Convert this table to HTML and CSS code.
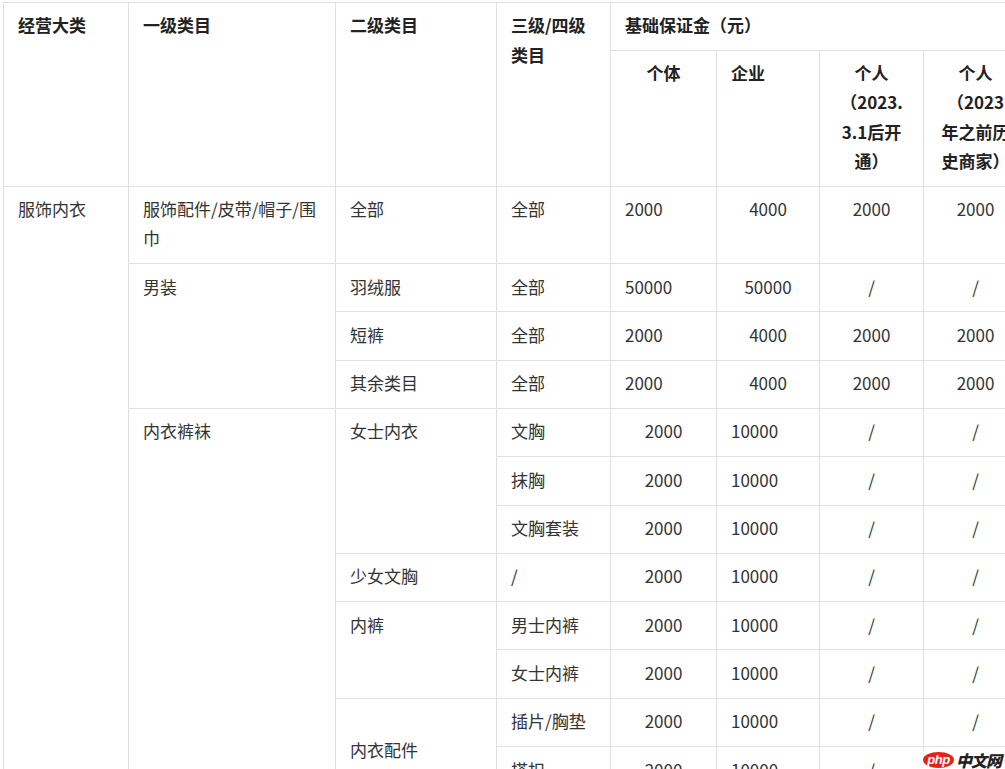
FILE: index.html
```html
<!DOCTYPE html>
<html lang="zh-CN">
<head>
<meta charset="utf-8">
<title>保证金标准</title>
<link rel="stylesheet" href="styles.css">
</head>
<body>
<div class="page">
  <table class="deposit">
    <colgroup>
      <col class="w1"><col class="w2"><col class="w3"><col class="w4">
      <col class="w5"><col class="w6"><col class="w7"><col class="w8">
    </colgroup>
    <thead>
      <tr>
        <th rowspan="2">经营大类</th>
        <th rowspan="2">一级类目</th>
        <th rowspan="2">二级类目</th>
        <th rowspan="2">三级/四级<br>类目</th>
        <th colspan="4" class="group">基础保证金（元）</th>
      </tr>
      <tr>
        <th class="c">个体</th>
        <th>企业</th>
        <th class="c">个人<br>（2023.<br>3.1后开<br>通）</th>
        <th class="c">个人<br>（2023<br>年之前历<br>史商家）</th>
      </tr>
    </thead>
    <tbody>
      <tr>
        <td rowspan="13">服饰内衣</td>
        <td>服饰配件/皮带/帽子/围<br>巾</td>
        <td>全部</td>
        <td>全部</td>
        <td>2000</td>
        <td class="c">4000</td>
        <td class="c">2000</td>
        <td class="c">2000</td>
      </tr>
      <tr>
        <td rowspan="3">男装</td>
        <td>羽绒服</td>
        <td>全部</td>
        <td>50000</td>
        <td class="c">50000</td>
        <td class="c">/</td>
        <td class="c">/</td>
      </tr>
      <tr>
        <td>短裤</td>
        <td>全部</td>
        <td>2000</td>
        <td class="c">4000</td>
        <td class="c">2000</td>
        <td class="c">2000</td>
      </tr>
      <tr>
        <td>其余类目</td>
        <td>全部</td>
        <td>2000</td>
        <td class="c">4000</td>
        <td class="c">2000</td>
        <td class="c">2000</td>
      </tr>
      <tr>
        <td rowspan="9">内衣裤袜</td>
        <td rowspan="3">女士内衣</td>
        <td>文胸</td>
        <td class="c">2000</td>
        <td>10000</td>
        <td class="c">/</td>
        <td class="c">/</td>
      </tr>
      <tr>
        <td>抹胸</td>
        <td class="c">2000</td>
        <td>10000</td>
        <td class="c">/</td>
        <td class="c">/</td>
      </tr>
      <tr>
        <td>文胸套装</td>
        <td class="c">2000</td>
        <td>10000</td>
        <td class="c">/</td>
        <td class="c">/</td>
      </tr>
      <tr>
        <td>少女文胸</td>
        <td>/</td>
        <td class="c">2000</td>
        <td>10000</td>
        <td class="c">/</td>
        <td class="c">/</td>
      </tr>
      <tr>
        <td rowspan="2">内裤</td>
        <td>男士内裤</td>
        <td class="c">2000</td>
        <td>10000</td>
        <td class="c">/</td>
        <td class="c">/</td>
      </tr>
      <tr>
        <td>女士内裤</td>
        <td class="c">2000</td>
        <td>10000</td>
        <td class="c">/</td>
        <td class="c">/</td>
      </tr>
      <tr>
        <td rowspan="2" class="mid">内衣配件</td>
        <td>插片/胸垫</td>
        <td class="c">2000</td>
        <td>10000</td>
        <td class="c">/</td>
        <td class="c">/</td>
      </tr>
      <tr>
        <td>搭扣</td>
        <td class="c">2000</td>
        <td>10000</td>
        <td class="c">/</td>
        <td class="c">/</td>
      </tr>
      <tr>
        <td>袜子</td>
        <td>全部</td>
        <td class="c">2000</td>
        <td>10000</td>
        <td class="c">/</td>
        <td class="c">/</td>
      </tr>
    </tbody>
  </table>
  <div class="watermark"><span class="wm-logo">php</span><span class="wm-text">中文网</span></div>
</div>
</body>
</html>
```
FILE: styles.css
```css
html {
  overflow: hidden;
}
body {
  margin: 0;
  background: #ffffff;
  font-family: "Noto Sans CJK SC", "Microsoft YaHei", sans-serif;
  color: #333333;
}
.page {
  padding: 2px 0 0 3px;
  position: relative;
  height: 769px;
  box-sizing: border-box;
}
.deposit {
  border-collapse: collapse;
  table-layout: fixed;
  width: 1024px;
  font-size: 17px;
}
.w1 { width: 125px; }
.w2 { width: 207px; }
.w3 { width: 161px; }
.w4 { width: 114px; }
.w5 { width: 106px; }
.w6 { width: 103px; }
.w7 { width: 104px; }
.w8 { width: 104px; }
.deposit th,
.deposit td {
  border: 1px solid #e0e0e0;
  text-align: left;
  vertical-align: top;
  white-space: nowrap;
  overflow: hidden;
}
.deposit th {
  font-weight: bold;
  color: #222222;
  padding: 7px 14px 10px;
  line-height: 29.5px;
}
.deposit td {
  font-weight: normal;
  padding: 7.5px 14px 10.5px;
  line-height: 29.3px;
}
.deposit .c {
  text-align: center;
}
.deposit td.mid {
  vertical-align: middle;
  padding-top: 17px;
}
.watermark {
  position: absolute;
  left: 923px;
  top: 751px;
  display: flex;
  align-items: center;
  gap: 2px;
  background: rgba(255, 255, 255, 0.85);
  padding: 1px 2px 1px 0;
}
.wm-logo {
  display: inline-block;
  width: 31px;
  height: 16px;
  border-radius: 50%;
  background: #e2231a;
  color: #ffffff;
  font-family: "Liberation Sans", Arial, sans-serif;
  font-style: italic;
  font-weight: bold;
  font-size: 13px;
  line-height: 15px;
  text-align: center;
  letter-spacing: -0.5px;
}
.wm-text {
  font-family: "Noto Sans CJK SC", sans-serif;
  font-weight: 900;
  font-style: italic;
  font-size: 16px;
  line-height: 16px;
  color: #222222;
  letter-spacing: -1px;
}
```
